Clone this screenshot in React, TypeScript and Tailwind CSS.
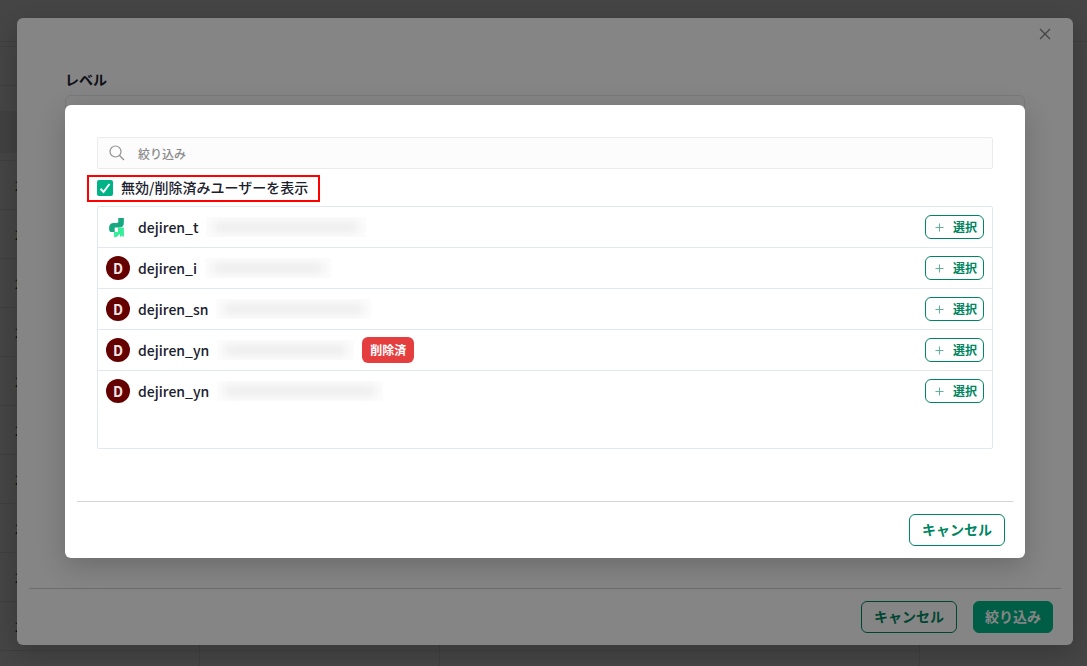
import React from 'react'
import clsx from 'clsx'

const users = [
  { name: 'dejiren_t', logo: true, deleted: false, mail: 'w-[160px]' },
  { name: 'dejiren_i', logo: false, deleted: false, mail: 'w-[126px]' },
  { name: 'dejiren_sn', logo: false, deleted: false, mail: 'w-[155px]' },
  { name: 'dejiren_yn', logo: false, deleted: true, mail: 'w-[137px]' },
  { name: 'dejiren_yn', logo: false, deleted: false, mail: 'w-[166px]' },
]

const tableRows = ['2', '2', '2', '2', '2', '2', '2', '2', '2', '2', '']

const LogoIcon = () => (
  <svg className="h-[19px] w-[15px]" viewBox="0 0 45 58" aria-hidden="true">
    <path d="M28 0h17v14c0 10-4 15-13 15H17v14H8c-5 0-8-3-8-8v-6c0-9 5-14 14-14h9c4 0 5-2 5-5z" fill="#16a880" />
    <path d="M27 29h18v29l-6-4-6 4V48L23 58h-8V43h12z" fill="#34ee9a" />
  </svg>
)

const PlusIcon = () => (
  <svg className="size-[9px]" viewBox="0 0 9 9" aria-hidden="true">
    <path d="M4.500 0.500v8M0.500 4.500h8" stroke="#5eb396" strokeWidth="1" />
  </svg>
)

const SearchIcon = () => (
  <svg className="size-4" viewBox="0 0 16 16" fill="none" stroke="#909090" strokeWidth="1.200" aria-hidden="true">
    <circle cx="6.500" cy="6.500" r="5.500" />
    <path d="M10.500 10.500l4.500 4.500" />
  </svg>
)

const CloseIcon = () => (
  <svg className="size-3" viewBox="0 0 12 12" fill="none" stroke="#7f8386" strokeWidth="1.300" aria-hidden="true">
    <path d="M1 1l10 10M11 1L1 11" />
  </svg>
)

const Button: React.FC<{
  primary?: boolean;
  children?: React.ReactNode;
}> = ({ primary = false, children }) => (
  <button
    type="button"
    className={clsx(
      'h-8 rounded-md border pb-[2px] text-sm leading-5 font-bold',
      primary ? 'border-[#00b386] bg-[#00b386] px-[11px] text-white' : 'border-[#008561] px-3 text-[#008561]',
    )}
  >
    {children}
  </button>
)

const Background = () => (
  <div className="flex h-screen flex-col overflow-hidden bg-white">
    <header className="h-[42px] shrink-0 border-b border-[#e8e8e8]" />
    <table className="mt-1 w-[920px] table-fixed border-separate border-spacing-0 border-t border-[#e8e8e8] text-sm">
      <colgroup>
        <col className="w-[200px]" />
        <col className="w-[240px]" />
        <col className="w-[480px]" />
      </colgroup>
      <tbody>
        <tr className="h-[39px]"><td colSpan={3} className="border-b border-[#e8e8e8]" /></tr>
        <tr className="h-[25px]"><td colSpan={3} /></tr>
        <tr className="h-[42px] bg-[#efefef]"><td colSpan={3} /></tr>
        <tr className="h-2"><td colSpan={3} className="border-b border-[#e8e8e8]" /></tr>
        {tableRows.map((text, row) => (
          <tr key={row} className="h-[49px]">
            <td className="border-r border-b border-[#e8e8e8] pl-[15px]">{text}</td>
            <td className="border-r border-b border-[#e8e8e8]" />
            <td className="border-r border-b border-[#e8e8e8]" />
          </tr>
        ))}
      </tbody>
    </table>
  </div>
)

const FilterDialog = () => (
  <div className="absolute inset-0 flex bg-black/48 pt-[18px] pr-[14px] pb-[21px] pl-[17px]">
    <section className="flex flex-1 flex-col rounded-md bg-white shadow-[0_8px_28px_rgba(0,0,0,0.2)]">
      <div className="flex h-8 items-center justify-end pr-[22px]">
        <button type="button" aria-label="閉じる"><CloseIcon /></button>
      </div>
      <div className="flex flex-1 flex-col px-12 pt-[19px]">
        <h2 className="text-sm leading-5 font-bold">レベル</h2>
        <div className="mt-[6px] h-40 rounded-md border border-[#e8e8e8]" />
      </div>
      <footer className="mx-3 flex justify-end gap-4 border-t border-[#cfcfcf] px-2 py-3">
        <Button>キャンセル</Button>
        <Button primary>絞り込み</Button>
      </footer>
    </section>
  </div>
)

const UserRow: React.FC<{ user: (typeof users)[number] }> = ({ user }) => (
  <li className="flex h-[41px] items-center border-b border-[#e2e8f0] px-2 last:border-transparent">
    {user.logo ? (
      <span className="flex size-6 items-center justify-center pr-1"><LogoIcon /></span>
    ) : (
      <span className="flex size-6 items-center justify-center rounded-full bg-[#640000] pb-px text-sm leading-5 font-bold text-[#f3e6e6]">D</span>
    )}
    <span className="ml-2 text-sm leading-5 font-medium">{user.name}</span>
    <span className={clsx('ml-2 flex h-5 items-center overflow-hidden bg-[#fcfcfc]', user.mail)}>
      <span className="mx-2 h-2 flex-1 bg-[#e8e8e8] blur-[5px]" />
    </span>
    {user.deleted && (
      <span className="ml-2 rounded-md bg-[#e53e3e] px-2 py-1 text-xs leading-[18px] font-bold text-white">削除済</span>
    )}
    <button
      type="button"
      className="ml-auto flex h-6 items-center gap-[9px] rounded-md border border-[#008561] pr-[6px] pl-[9px] text-xs leading-4 font-bold text-[#008561]"
    >
      <PlusIcon />
      選択
    </button>
  </li>
)

const UserDialog = () => (
  <div className="absolute inset-0 bg-black/48 pt-[105px] pr-[62px] pl-[65px]">
    <section className="rounded-md bg-white shadow-[0_8px_28px_rgba(0,0,0,0.2)]">
      <div className="px-8 pt-8 pb-[52px]">
        <div className="flex h-8 items-center gap-[13px] rounded-xs border border-[#ebebeb] bg-[#fcfcfc] px-[11px]">
          <SearchIcon />
          <input
            type="text"
            aria-label="絞り込み"
            placeholder="絞り込み"
            className="min-w-0 flex-1 bg-transparent pt-[2px] text-xs leading-5 font-medium outline-none placeholder:text-[#8a8a8a]"
          />
        </div>
        <label className="mt-[6px] -ml-[10px] flex h-[27px] w-fit items-center gap-2 border-2 border-[#ff0000] pr-[10px] pb-[2px] pl-2 text-sm leading-5 font-medium">
          <span className="grid size-4">
            <input type="checkbox" defaultChecked className="col-start-1 row-start-1 size-4 appearance-none rounded-xs bg-[#00b386]" />
            <svg className="pointer-events-none z-10 col-start-1 row-start-1 size-4" viewBox="0 0 16 16" fill="none" stroke="#fff" strokeWidth="2" aria-hidden="true">
              <path d="M3.500 8.800l3 3.200 6-8" />
            </svg>
          </span>
          <span className="pb-[2px]">無効/削除済みユーザーを表示</span>
        </label>
        <ul className="mt-1 h-[243px] overflow-y-auto rounded-xs border border-[#e2e8f0]">
          {users.map((user, key) => (
            <UserRow key={key} user={user} />
          ))}
        </ul>
      </div>
      <footer className="mx-3 flex justify-end border-t border-[#d4d4d4] px-2 py-3">
        <Button>キャンセル</Button>
      </footer>
    </section>
  </div>
)

const App = () => (
  <main className="relative overflow-hidden font-['Noto_Sans_CJK_JP',sans-serif] text-[#1a202c]">
    <Background />
    <FilterDialog />
    <UserDialog />
  </main>
)

export default App
